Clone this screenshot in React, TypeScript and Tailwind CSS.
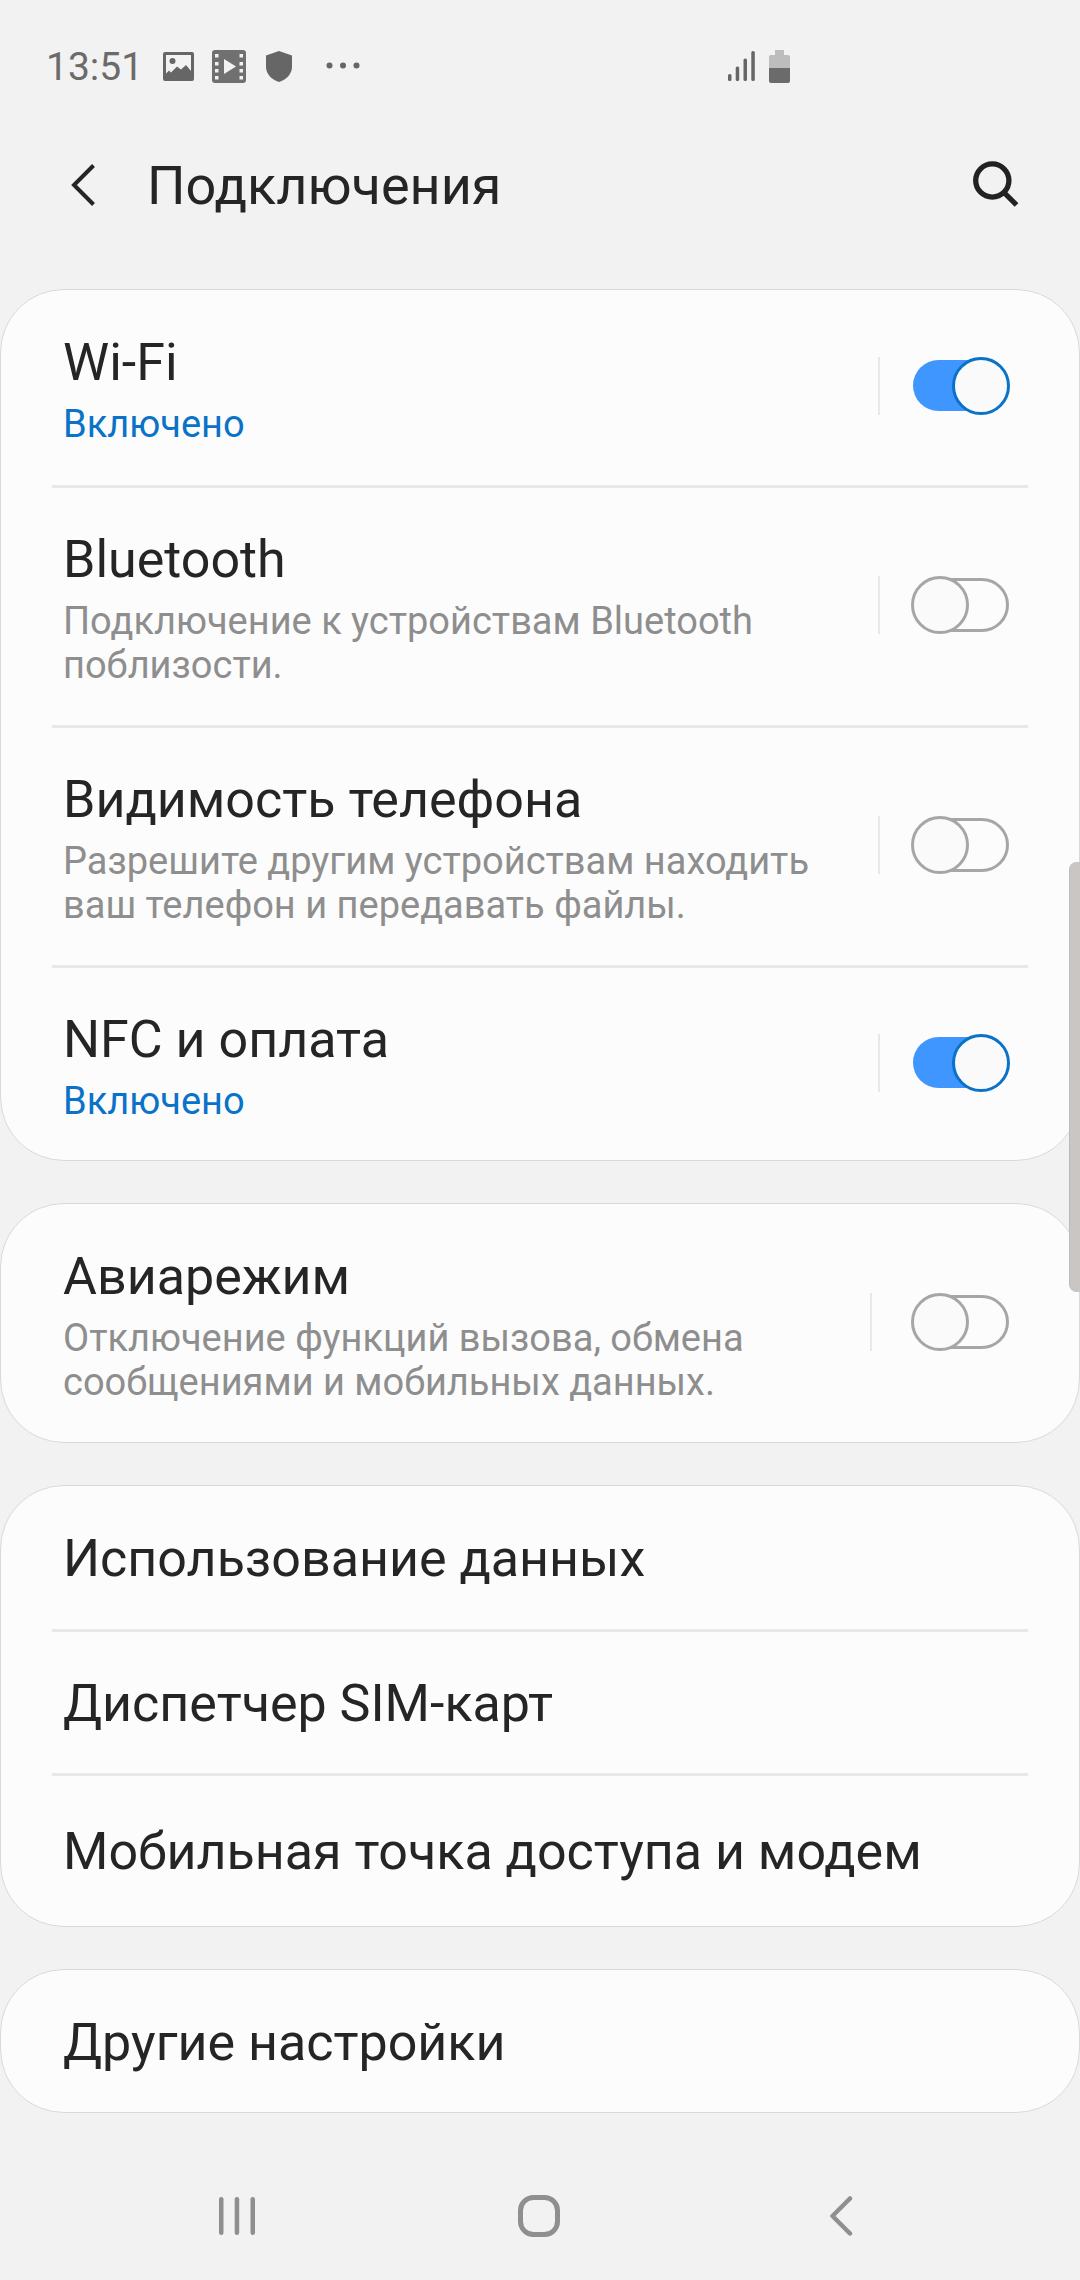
import React from "react";

function Toggle({ on }: { on: boolean }) {
  return (
    <div className="relative w-[99px] h-[58px] shrink-0">
      {on ? (
        <>
          <div className="absolute left-[2px] top-[3px] w-[80px] h-[51px] rounded-full bg-[#4096ff]" />
          <div className="absolute right-0 top-0 w-[58px] h-[58px] rounded-full border-[3px] border-[#0a72c8] bg-[#fafafa]" />
        </>
      ) : (
        <>
          <div className="absolute left-[10px] right-[1px] top-[2px] h-[54px] rounded-full border-[3px] border-[#a6a6a6]" />
          <div className="absolute left-0 top-0 w-[58px] h-[58px] rounded-full border-[3px] border-[#a6a6a6] bg-[#fafafa]" />
        </>
      )}
    </div>
  );
}

function Divider() {
  return <div className="mx-[51px] h-[3px] bg-[#e8e8e8]" />;
}

function ToggleRow({
  title,
  sub,
  blue,
  on,
  h,
  gap = "ml-[31px]",
}: {
  title: string;
  sub: React.ReactNode;
  blue?: boolean;
  on: boolean;
  h: string;
  gap?: string;
}) {
  return (
    <div className={"flex items-center pl-[62px] pr-[69px] " + h}>
      <div className="flex-1 min-w-0 pt-[5px]">
        <div className="text-[52px] leading-[58px] text-[#252525]">{title}</div>
        <div className={"mt-[10px] text-[38px] leading-[44px] " + (blue ? "text-[#0a72c8]" : "text-[#8e8e8e]")}>{sub}</div>
      </div>
      <div className="w-[2px] h-[58px] mb-[3px] bg-[#e8e8e8]" />
      <div className={"mb-[3px] " + gap}>
        <Toggle on={on} />
      </div>
    </div>
  );
}

function PlainRow({ title, h }: { title: string; h: string }) {
  return (
    <div className={"flex items-center pl-[62px] text-[52px] text-[#252525] " + h}>{title}</div>
  );
}

function Card({ children }: { children: React.ReactNode }) {
  return <div className="bg-[#fcfcfc] border border-[#d9d9d9] rounded-[64px]">{children}</div>;
}

function StatusBar() {
  return (
    <div className="flex items-center h-[132px] pl-[46px] pr-[290px]">
      <span className="w-[117px] mt-[2px] text-[39px] leading-none text-[#6b6b6b]">13:51</span>
      <svg width="31" height="29" viewBox="0 0 31 29">
        <rect width="31" height="29" rx="2" fill="#666" />
        <path fill="#f2f2f2" d="M3 3h25v16l-5-6-5 4.500-4-3-6 6-2-2-3 3z" />
        <circle cx="9.500" cy="9" r="3" fill="#666" />
      </svg>
      <svg className="ml-[18px]" width="34" height="33" viewBox="0 0 34 33">
        <rect width="34" height="33" rx="3" fill="#707070" />
        <g fill="#f2f2f2">
          <rect x="3" y="4" width="3.500" height="3.500" />
          <rect x="3" y="12" width="3.500" height="3.500" />
          <rect x="3" y="19" width="3.500" height="3.500" />
          <rect x="3" y="26" width="3.500" height="3.500" />
          <rect x="27.500" y="4" width="3.500" height="3.500" />
          <rect x="27.500" y="12" width="3.500" height="3.500" />
          <rect x="27.500" y="19" width="3.500" height="3.500" />
          <rect x="27.500" y="26" width="3.500" height="3.500" />
          <path d="M12 9l12 7.500-12 7.500z" />
        </g>
      </svg>
      <svg className="ml-[20px]" width="26" height="31" viewBox="0 0 26 31">
        <path fill="#666" d="M13 0l13 4.500v11.500c0 7-6 13-13 15C6 29 0 23 0 16V4.500z" />
      </svg>
      <svg className="ml-[34px] mb-[2px]" width="34" height="7" viewBox="0 0 34 7">
        <circle cx="3.500" cy="3.500" r="3" fill="#666" />
        <circle cx="17" cy="3.500" r="3" fill="#666" />
        <circle cx="30.500" cy="3.500" r="3" fill="#666" />
      </svg>
      <div className="flex-1" />
      <svg width="27" height="30" viewBox="0 0 27 30">
        <rect x="0" y="23" width="3.500" height="7" rx="1.500" fill="#666" />
        <rect x="7.700" y="15.500" width="3.500" height="14.500" rx="1.500" fill="#666" />
        <rect x="15.500" y="7.500" width="3.500" height="22.500" rx="1.500" fill="#666" />
        <rect x="23.300" y="0" width="3.500" height="30" rx="1.500" fill="#666" />
      </svg>
      <svg className="ml-[14px]" width="21" height="33" viewBox="0 0 21 33">
        <path fill="#bdbdbd" d="M6 0h9v5h4a2 2 0 0 1 2 2v11H0V7a2 2 0 0 1 2-2h4z" />
        <path fill="#6b6b6b" d="M0 18h21v13a2 2 0 0 1-2 2H2a2 2 0 0 1-2-2z" />
      </svg>
    </div>
  );
}

function Header() {
  return (
    <div className="flex items-center h-[108px] pl-[70px] pr-[61px]">
      <svg className="mb-[3px]" width="26" height="44" viewBox="0 0 26 44" fill="none">
        <path d="M23.500 2.500L4 22l19.500 19.500" stroke="#252525" strokeWidth="4" />
      </svg>
      <div className="ml-[51px] flex-1 text-[54px] leading-none text-[#252525]">Подключения</div>
      <svg className="mb-[5px]" width="46" height="46" viewBox="0 0 46 46" fill="none">
        <circle cx="19.300" cy="19.500" r="16.600" stroke="#222" strokeWidth="5.300" />
        <path d="M30.500 31l13 13" stroke="#222" strokeWidth="5.300" />
      </svg>
    </div>
  );
}

function NavBar() {
  return (
    <div className="flex items-center h-[128px] mt-[39px]">
      <svg className="ml-[219px]" width="36" height="38" viewBox="0 0 36 38">
        <rect x="0" y="0" width="4.500" height="38" rx="2.200" fill="#8f8f8f" />
        <rect x="15.700" y="0" width="4.500" height="38" rx="2.200" fill="#8f8f8f" />
        <rect x="31.500" y="0" width="4.500" height="38" rx="2.200" fill="#8f8f8f" />
      </svg>
      <svg className="ml-[263px]" width="42" height="42" viewBox="0 0 42 42" fill="none">
        <rect x="2.500" y="2.500" width="37" height="37" rx="13" stroke="#8f8f8f" strokeWidth="5" />
      </svg>
      <svg className="ml-[270px]" width="23" height="40" viewBox="0 0 23 40" fill="none">
        <path d="M20 2.500L2.500 20 20 37.500" stroke="#8f8f8f" strokeWidth="4.500" strokeLinecap="round" strokeLinejoin="round" />
      </svg>
    </div>
  );
}

export default function App() {
  return (
    <div className="relative w-[1080px] h-[2280px] overflow-hidden bg-[#f2f2f2] font-['Roboto',sans-serif]">
      <StatusBar />
      <Header />
      <div className="mt-[49px] flex flex-col gap-[42px]">
        <Card>
          <ToggleRow title="Wi-Fi" sub="Включено" blue on h="h-[195px]" />
          <Divider />
          <ToggleRow
            title="Bluetooth"
            h="h-[237px]"
            sub={
              <>
                Подключение к устройствам Bluetooth
                <br />
                поблизости.
              </>
            }
            on={false}
          />
          <Divider />
          <ToggleRow
            title="Видимость телефона"
            h="h-[237px]"
            sub={
              <>
                Разрешите другим устройствам находить
                <br />
                ваш телефон и передавать файлы.
              </>
            }
            on={false}
          />
          <Divider />
          <ToggleRow title="NFC и оплата" sub="Включено" blue on h="h-[192px]" />
        </Card>
        <Card>
          <ToggleRow
            title="Авиарежим"
            h="h-[238px]"
            sub={
              <>
                Отключение функций вызова, обмена
                <br />
                сообщениями и мобильных данных.
              </>
            }
            on={false}
            gap="ml-[39px]"
          />
        </Card>
        <Card>
          <PlainRow title="Использование данных" h="h-[143px] pt-[2px]" />
          <Divider />
          <PlainRow title="Диспетчер SIM-карт" h="h-[141px] pt-[2px]" />
          <Divider />
          <PlainRow title="Мобильная точка доступа и модем" h="h-[150px] pt-[2px]" />
        </Card>
        <Card>
          <PlainRow title="Другие настройки" h="h-[142px] pt-[4px]" />
        </Card>
      </div>
      <NavBar />
      <div className="absolute right-0 top-[862px] w-[11px] h-[430px] rounded-l-[8px] border-l border-[#bdbbb9] bg-[#c9c6c4]" />
    </div>
  );
}
